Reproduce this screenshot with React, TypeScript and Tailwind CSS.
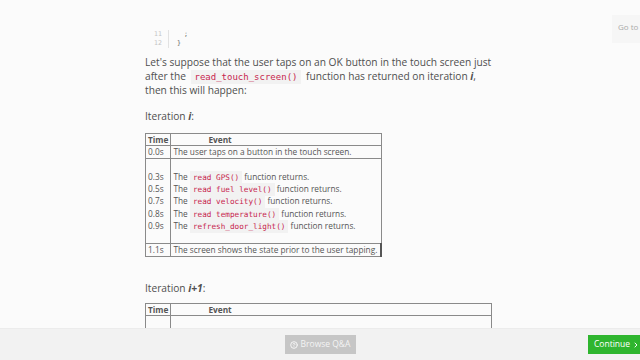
import { CircleHelp, ChevronRight } from "lucide-react"

const sans = "font-['Open_Sans',_'Liberation_Sans',_sans-serif]"
const mono = "font-['DejaVu_Sans_Mono',_'Liberation_Mono',_monospace]"

function Code({ children, small }: { children: string; small?: boolean }) {
  return (
    <code
      className={`${mono} bg-[#f2f2f2] text-[#c7254e] leading-none ${
        small ? "text-[7.7px] px-[3px] py-[2px]" : "text-[9px] px-[4px] py-[2px] mx-[2px]"
      }`}
    >
      {children}
    </code>
  )
}

const steps = [
  { t: "0.3s", fn: "read GPS()" },
  { t: "0.5s", fn: "read fuel level()" },
  { t: "0.7s", fn: "read velocity()" },
  { t: "0.8s", fn: "read temperature()" },
  { t: "0.9s", fn: "refresh_door_light()" },
]

const cell = "border border-[#8a8a8a] px-[2px]"

function HeaderRow() {
  return (
    <tr>
      <td className={`${cell} w-[25px] h-[12px] font-bold leading-[11px]`}>Time</td>
      <td className={`${cell} pl-[37px] font-bold leading-[11px]`}>Event</td>
    </tr>
  )
}

export default function App() {
  return (
    <div className={`relative w-[640px] h-[360px] overflow-hidden bg-[#fbfbfb] ${sans} text-[#555]`}>
      <div className="pl-[145px] pt-[30px]">
        {/* tail of the previous code block */}
        <div className={`${mono} flex text-[6.5px] leading-[9px]`}>
          <div className="w-[18px] pl-[9px] text-[#c4c4c4]">
            <div>11</div>
            <div>12</div>
          </div>
          <div className="ml-[5px] border-l border-[#e2e2e2] pl-[8px] text-[#666]">
            <div className="pl-[7px]">;</div>
            <div>{"}"}</div>
          </div>
        </div>

        <p className="mt-[7px] w-[352px] text-[10.2px] leading-[14px] text-[#4f4f4f]">
          Let's suppose that the user taps on an OK button in the touch screen just after the{" "}
          <Code>read_touch_screen()</Code> function has returned on iteration <b><i>i</i></b>,
          <br />
          then this will happen:
        </p>

        <p className="mt-[12px] text-[10.2px] leading-[14px] text-[#4f4f4f]">
          Iteration <b><i>i</i></b>:
        </p>

        <table className="mt-[10px] border-collapse border border-[#8a8a8a] w-[237px] text-[8.3px] text-[#555]">
          <tbody>
            <HeaderRow />
            <tr>
              <td className={`${cell} leading-[12px]`}>0.0s</td>
              <td className={`${cell} leading-[12px] whitespace-nowrap`}>The user taps on a button in the touch screen.</td>
            </tr>
            <tr>
              <td className={`${cell} align-top`}>
                <div className="h-[12px]" />
                {steps.map((s) => (
                  <div key={s.t} className="h-[12.2px] leading-[12.2px]">{s.t}</div>
                ))}
                <div className="h-[11px]" />
              </td>
              <td className={`${cell} align-top whitespace-nowrap`}>
                <div className="h-[12px]" />
                {steps.map((s) => (
                  <div key={s.t} className="h-[12.2px] leading-[12.2px]">
                    The <Code small>{s.fn}</Code> function returns.
                  </div>
                ))}
                <div className="h-[11px]" />
              </td>
            </tr>
            <tr>
              <td className={`${cell} leading-[12px]`}>1.1s</td>
              <td className={`${cell} border-r-2 border-r-[#555] leading-[12px] whitespace-nowrap`}>
                The screen shows the state prior to the user tapping.
              </td>
            </tr>
          </tbody>
        </table>

        <p className="mt-[24px] text-[10.2px] leading-[14px] text-[#4f4f4f]">
          Iteration <b><i>i+1</i></b>:
        </p>

        <table className="mt-[8px] border-collapse border border-[#8a8a8a] w-[347px] text-[8.3px] text-[#555]">
          <tbody>
            <HeaderRow />
            <tr className="h-[20px]">
              <td className="border border-[#8a8a8a]" />
              <td className="border border-[#8a8a8a]" />
            </tr>
          </tbody>
        </table>
      </div>

      {/* "Go to" tab, top right */}
      <div className="absolute right-0 top-[15px] h-[28px] w-[28px] bg-[#f6f6f6] pl-[6px] pt-[6px] text-[8px] text-[#aaa]">
        <span className="whitespace-nowrap">Go to</span>
      </div>

      {/* bottom bar */}
      <div className="absolute inset-x-0 bottom-0 h-[32px] bg-[#f2f2f2] border-t border-[#ececec] flex items-center justify-center">
        <button className="flex h-[19px] w-[71px] items-center justify-center gap-[3px] bg-[#c6c6c6] text-[8.5px] text-[#f4f4f4]">
          <CircleHelp className="h-[8px] w-[8px]" strokeWidth={3} />
          Browse Q&amp;A
        </button>
        <button className="absolute right-0 flex h-[19px] w-[52px] items-center gap-[2px] bg-[#2eb52e] pl-[6px] text-[8.5px] text-white">
          Continue
          <ChevronRight className="h-[8px] w-[8px]" strokeWidth={3} />
        </button>
      </div>
    </div>
  )
}
